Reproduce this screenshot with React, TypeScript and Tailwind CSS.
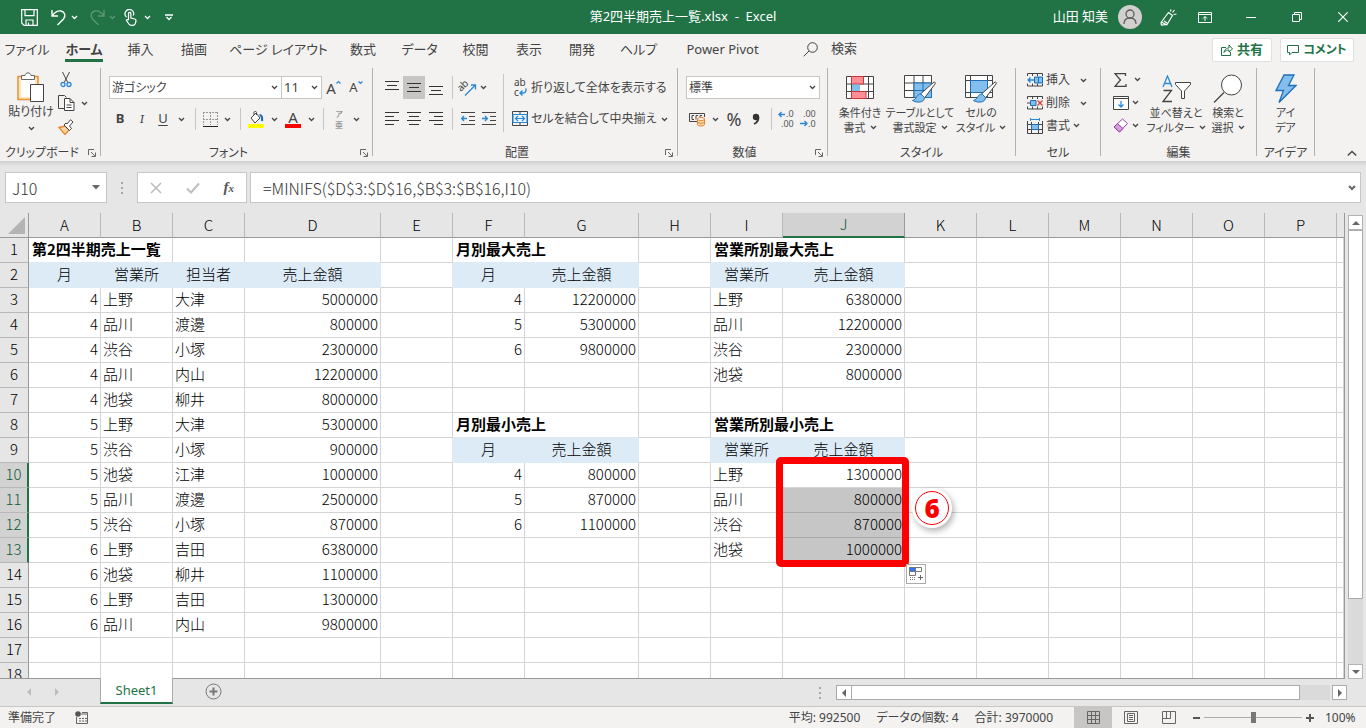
import {ReactNode} from "react";

type Cell = string | number;

const columns = ["A", "B", "C", "D", "E", "F", "G", "H", "I", "J", "K", "L", "M", "N", "O", "P", ""];
const widths = [72, 72, 72, 136, 72, 72, 114, 72, 72, 122, 72, 72, 72, 72, 72, 72];

const blank: Cell[] = ["", "", "", "", "", "", "", "", "", "", "", "", "", "", "", "", ""];

const fillRow = (values: Cell[]) => blank.map((cell, i) => values[i] ?? cell);

const rows: Cell[][] = [
    ["第2四半期売上一覧", "", "", "", "", "月別最大売上", "", "", "営業所別最大売上"],
    ["月", "営業所", "担当者", "売上金額", "", "月", "売上金額", "", "営業所", "売上金額"],
    [4, "上野", "大津", 5000000, "", 4, 12200000, "", "上野", 6380000],
    [4, "品川", "渡邊", 800000, "", 5, 5300000, "", "品川", 12200000],
    [4, "渋谷", "小塚", 2300000, "", 6, 9800000, "", "渋谷", 2300000],
    [4, "品川", "内山", 12200000, "", "", "", "", "池袋", 8000000],
    [4, "池袋", "柳井", 8000000],
    [5, "上野", "大津", 5300000, "", "月別最小売上", "", "", "営業所別最小売上"],
    [5, "渋谷", "小塚", 900000, "", "月", "売上金額", "", "営業所", "売上金額"],
    [5, "池袋", "江津", 1000000, "", 4, 800000, "", "上野", 1300000],
    [5, "品川", "渡邊", 2500000, "", 5, 870000, "", "品川", 800000],
    [5, "渋谷", "小塚", 870000, "", 6, 1100000, "", "渋谷", 870000],
    [6, "上野", "吉田", 6380000, "", "", "", "", "池袋", 1000000],
    [6, "池袋", "柳井", 1100000],
    [6, "上野", "吉田", 1300000],
    [6, "品川", "内山", 9800000],
    [],
    [],
].map(fillRow);

const isTitle = (r: number, c: number) =>
    (r === 0 && [0, 5, 8].includes(c)) || (r === 7 && [5, 8].includes(c));

const isHeading = (r: number, c: number) =>
    (r === 1 && (c <= 3 || c === 5 || c === 6 || c === 8 || c === 9)) ||
    (r === 8 && (c === 5 || c === 6 || c === 8 || c === 9));

const isSelectedRow = (r: number) => r >= 9 && r <= 12;

const tabs = [
    {name: "ファイル", width: "w-[54px]"},
    {name: "ホーム", width: "w-[60px]"},
    {name: "挿入", width: "w-[53px]"},
    {name: "描画", width: "w-[54px]"},
    {name: "ページ レイアウト", width: "w-[115px]"},
    {name: "数式", width: "w-[54px]"},
    {name: "データ", width: "w-[59px]"},
    {name: "校閲", width: "w-[53px]"},
    {name: "表示", width: "w-[54px]"},
    {name: "開発", width: "w-[52px]"},
    {name: "ヘルプ", width: "w-[61px]"},
    {name: "Power Pivot", width: "w-[107px]"},
];

const Icon = ({w, h, children, className = ""}: {w: number, h: number, children: ReactNode, className?: string}) => (
    <svg width={w} height={h} viewBox={`0 0 ${w} ${h}`} fill="none" stroke="#444" className={"shrink-0 " + className}
         aria-hidden="true">
        {children}
    </svg>
);

const Chevron = ({color = "#444"}: {color?: string}) => (
    <Icon w={7} h={5} className="inline-block"><path d="M1 1l2.5 2.5L6 1" stroke={color} strokeWidth="1.3"/></Icon>
);

const Tool = ({label, className, children}: {label: string, className: string, children: ReactNode}) => (
    <button type="button" aria-label={label} className={"flex h-full shrink-0 items-center justify-center " + className}>
        {children}
    </button>
);

const Drop = ({className}: {className: string}) => (
    <Tool label="その他のオプション" className={className}><Chevron/></Tool>
);

const Divider = ({className}: {className: string}) => (
    <div className={"flex h-full shrink-0 justify-center " + className}><div className="h-full w-px bg-[#c8c6c4]"/></div>
);

const Group = ({name, className, launcher, children}: {name: string, className: string, launcher?: boolean, children: ReactNode}) => (
    <section aria-label={name} className={"flex shrink-0 " + className}>
        <div className="flex min-w-0 flex-1 flex-col">
            <div className="h-[76px] shrink-0">{children}</div>
            <div className="flex h-[17px] shrink-0 items-center">
                <span className="flex-1 whitespace-nowrap text-center leading-[17px]">{name}</span>
                {launcher && (
                    <button type="button" aria-label={name + "の設定"} className="w-4 pl-1">
                        <Icon w={8} h={8}><path d="M.5 6V.5H6M3 3l4 4M7.5 3.5v4h-4" stroke="#666"/></Icon>
                    </button>
                )}
            </div>
        </div>
        <div className="h-[88px] w-px bg-[#b3b0ad]"/>
    </section>
);

const BigButton = ({icon, lines, drop, className}: {icon: ReactNode, lines: string[], drop?: boolean, className: string}) => (
    <button type="button" className={"flex shrink-0 flex-col items-center whitespace-nowrap text-[11px] leading-[15px] " + className}>
        <span className="flex h-[37px] items-center pt-1">{icon}</span>
        <span>{lines[0]}</span>
        <span className="flex items-center gap-1">{lines[1]}{drop && <Chevron/>}</span>
    </button>
);

const Lines = ({rows}: {rows: number[][]}) => (
    <Icon w={14} h={14}>
        {rows.map(([x, y, w]) => <path key={y} d={`M${x} ${y}.5h${w}`} stroke="#333"/>)}
    </Icon>
);

const TitleBar = () => (
    <header className="flex h-[34px] shrink-0 items-center bg-[#217346] text-[13px] text-white">
        <div className="flex flex-1 items-center">
            <button type="button" aria-label="上書き保存" className="ml-[21px]">
                <Icon w={17} h={17}>
                    <path d="M.7.7h15.6v15.6H3L.7 14zM4 .7v6h9v-6M5 16v-5h7v5M7.5 16v-2.500" stroke="#fff" strokeWidth="1.2"/>
                </Icon>
            </button>
            <button type="button" aria-label="元に戻す" className="ml-[13px] flex items-center gap-1">
                <Icon w={16} h={17}>
                    <path d="M1 1v6h6M1.300 6.700C4 3 7 1.500 10 2c4 .7 5 5 2.500 8L6.500 16" stroke="#fff" strokeWidth="1.400"/>
                </Icon>
                <Chevron color="#fff"/>
            </button>
            <button type="button" aria-label="やり直し" className="ml-[11px] flex items-center gap-1 opacity-25">
                <Icon w={16} h={17}>
                    <path d="M15 1v6H9M14.700 6.700C12 3 9 1.500 6 2 2 2.700 1 7 3.500 10l6 6" stroke="#fff" strokeWidth="1.400"/>
                </Icon>
                <Chevron color="#fff"/>
            </button>
            <button type="button" aria-label="タッチ/マウス モードの切り替え" className="ml-[8px] flex items-center gap-1.5">
                <Icon w={14} h={17}>
                    <path d="M2.500 8A4.300 4.300 0 1 1 9.300 6.500M4.500 11V4.500a1.200 1.200 0 0 1 2.400 0V9l3.800 1c1 .3 1.500.8 1.300 2l-.7 2.500c-.5 1.200-1 1.800-2.300 1.800H7c-1.500 0-2.300-1-3.500-3.300L2.300 11c.6-.8 1.400-.6 2.200.3"
                          stroke="#fff" strokeWidth="1.200"/>
                </Icon>
                <Chevron color="#fff"/>
            </button>
            <button type="button" aria-label="クイック アクセス ツール バーのユーザー設定" className="ml-[14px]">
                <Icon w={8} h={7}><path d="M0 1h8M1.500 3L4 5.500 6.500 3" stroke="#fff" strokeWidth="1.300"/></Icon>
            </button>
        </div>
        <h1 className="whitespace-pre">第2四半期売上一覧.xlsx  -  Excel</h1>
        <div className="flex flex-1 items-center justify-end">
            <span>山田 知美</span>
            <button type="button" aria-label="アカウント" className="ml-[10px] flex size-6 items-center justify-center rounded-full bg-[#d2d0ce]">
                <Icon w={14} h={16}>
                    <circle cx="7" cy="5" r="4" stroke="#605e5c" strokeWidth="1.300"/>
                    <path d="M1 15c0-4 2.500-6 6-6s6 2 6 6" stroke="#605e5c" strokeWidth="1.300"/>
                </Icon>
            </button>
            <button type="button" aria-label="近日公開の機能" className="ml-[18px]">
                <Icon w={17} h={17}>
                    <path d="M1 13.500L8.500 3.500l4 3L7 15.500l-5.500.5zM1 13l6.500 3M10.500 2.500l.5-2M12.500 3.500l2-2.500M13.500 5.500l3-.5M4 12l3 2" stroke="#fff" strokeWidth="1.200"/>
                </Icon>
            </button>
            <button type="button" aria-label="リボンの表示オプション" className="ml-[21px]">
                <Icon w={14} h={11}><path d="M.5.5h13v10H.5zM.5 2.500h13M7 9V4.500M5 6.500l2-2 2 2" stroke="#fff"/></Icon>
            </button>
            <button type="button" aria-label="最小化" className="ml-[34px]">
                <Icon w={10} h={10}><path d="M0 5.500h10" stroke="#fff"/></Icon>
            </button>
            <button type="button" aria-label="元に戻す (縮小)" className="ml-[36px]">
                <Icon w={10} h={10}><path d="M.5 2.500h7v7h-7zM2.500 2.500v-2h7v7h-2" stroke="#fff"/></Icon>
            </button>
            <button type="button" aria-label="閉じる" className="ml-[36px] mr-[18px]">
                <Icon w={10} h={10}><path d="M.3.3l9.400 9.400M9.700.3L.3 9.700" stroke="#fff" strokeWidth="1.200"/></Icon>
            </button>
        </div>
    </header>
);

const Tabs = () => (
    <nav className="flex h-8 items-center text-[13px]">
        {tabs.map((tab, index) => (
            <button key={tab.name} type="button" className={"flex h-full shrink-0 justify-center whitespace-nowrap " + tab.width}>
                <span className={index === 1 ? "h-[28px] border-b-3 border-[#217346] font-bold leading-[30px]" : "leading-[30px]"}>
                    {tab.name}
                </span>
            </button>
        ))}
        <button type="button" className="ml-[27px] flex h-full items-center gap-[13px] pb-0.5">
            <Icon w={15} h={15}><circle cx="9.500" cy="5.500" r="4.800"/><path d="M6 9L.7 14.300"/></Icon>
            検索
        </button>
        <div className="ml-auto flex gap-2 pr-3 font-bold text-[#217346]">
            <button type="button" className="flex h-6 w-[60px] items-center justify-center gap-1 rounded-xs border border-[#e1dfdd] bg-white">
                <Icon w={12} h={12}>
                    <path d="M5 3.500H.5v8h9V8M3 8.500C3.500 5 6 4 8 4V1l3.500 4L8 8V6C6 6 4 6.500 3 8.500z" stroke="#217346"/>
                </Icon>
                共有
            </button>
            <button type="button" className="flex h-6 w-[74px] items-center justify-center gap-1 whitespace-nowrap rounded-xs border border-[#e1dfdd] bg-white text-xs">
                <Icon w={12} h={11}><path d="M.5.5h11v7H5l-2.500 2.500V7.500h-2z" stroke="#217346"/></Icon>
                コメント
            </button>
        </div>
    </nav>
);

const ClipboardGroup = () => (
    <Group name="クリップボード" launcher className="w-[101px]">
        <div className="flex h-full">
            <button type="button" className="flex w-[54px] shrink-0 flex-col items-center whitespace-nowrap pl-2 pt-1">
                <Icon w={28} h={31}>
                    <path d="M1 4.500h20v23H1z" stroke="#e8912d" strokeWidth="1.500" fill="#fce4bd"/>
                    <path d="M4 7h14v18H4z" fill="#fff" stroke="none"/>
                    <path d="M4.500 7.500v-4H8c.5-3.500 5.500-3.500 6 0h3.500v4z" fill="#fff" stroke="#666"/>
                    <path d="M13.500 12.500h13v17h-13z" fill="#fff"/>
                </Icon>
                <span className="leading-[18px]">貼り付け</span>
                <span className="pt-1 leading-[5px]"><Chevron/></span>
            </button>
            <div className="flex flex-col">
                <div className="flex h-[23px]">
                    <Tool label="切り取り" className="w-6">
                        <Icon w={12} h={17}>
                            <path d="M2.500 1l5.500 11M9.500 1L4 12"/>
                            <circle cx="3" cy="13.500" r="2" stroke="#2b88d8" strokeWidth="1.300"/>
                            <circle cx="9" cy="13.500" r="2" stroke="#2b88d8" strokeWidth="1.300"/>
                        </Icon>
                    </Tool>
                </div>
                <div className="flex h-6">
                    <Tool label="コピー" className="w-6">
                        <Icon w={17} h={16}>
                            <path d="M6.500 13.500h-6V.5h6l2 2"/>
                            <path d="M6.500 3.500h5.500l4 4v8H6.500zM12 3.500v4h4M8.500 10h5M8.500 12.500h5" fill="#fff"/>
                        </Icon>
                    </Tool>
                    <Drop className="w-[12px]"/>
                </div>
                <div className="flex h-[23px]">
                    <Tool label="書式のコピー/貼り付け" className="w-6">
                        <Icon w={16} h={16}>
                            <path d="M1 8.500l6-1.500 4 4-4 4.500z" fill="#fbd7a5" stroke="#e8832a" strokeWidth="1.300"/>
                            <path d="M6 6l5.500 5.500 2-2L11.500 7 15 3 12.500.7 9 5 8 4z" fill="#fff"/>
                        </Icon>
                    </Tool>
                </div>
            </div>
        </div>
    </Group>
);

const FontGroup = () => (
    <Group name="フォント" launcher className="w-[272px]">
        <div className="pl-2 pt-2">
            <div className="flex h-[23px]">
                <div className="relative w-[173px]">
                    <select aria-label="フォント" className="h-full w-full appearance-none border border-[#c8c6c4] bg-white px-0.5 text-xs">
                        <option>游ゴシック</option>
                    </select>
                    <span className="pointer-events-none absolute right-1 top-0 flex h-full items-center"><Chevron/></span>
                </div>
                <div className="relative -ml-px w-[41px]">
                    <select aria-label="フォント サイズ" className="h-full w-full appearance-none border border-[#c8c6c4] bg-white px-0.5 text-[13px]">
                        <option>11</option>
                    </select>
                    <span className="pointer-events-none absolute right-1 top-0 flex h-full items-center"><Chevron/></span>
                </div>
                <Tool label="フォント サイズの拡大" className="w-[23px] text-[15px]">
                    A<Icon w={5} h={18}><path d="M.5 4.500l2-2 2 2" stroke="#2b88d8" strokeWidth="1.200"/></Icon>
                </Tool>
                <Tool label="フォント サイズの縮小" className="w-[22px] text-[13px]">
                    A<Icon w={5} h={18}><path d="M.5 2.500l2 2 2-2" stroke="#2b88d8" strokeWidth="1.200"/></Icon>
                </Tool>
            </div>
            <div className="mt-[9px] flex h-[22px] text-[13px]">
                <Tool label="太字" className="w-[22px] font-bold">B</Tool>
                <Tool label="斜体" className="w-[22px] font-serif italic">I</Tool>
                <Tool label="下線" className="w-5 underline underline-offset-2">U</Tool>
                <Drop className="w-4"/>
                <Divider className="w-[13px]"/>
                <Tool label="罫線" className="w-4">
                    <Icon w={15} h={15}>
                        <path d="M.5 0v13M7.500 0v13M14.500 0v13M0 .5h15M0 7.500h15" stroke="#999" strokeDasharray="2 1"/>
                        <path d="M0 14.500h15" stroke="#222"/>
                    </Icon>
                </Tool>
                <Drop className="w-[18px]"/>
                <Divider className="w-[9px]"/>
                <Tool label="塗りつぶしの色" className="w-[22px]">
                    <Icon w={16} h={17}>
                        <path d="M3 7l5-5 4 5-5 5zM6 4V1.500c0-1.500 2.500-1.500 2.500 0V4" fill="#fff"/>
                        <path d="M11.500 4c2 0 3 2 2.500 6" stroke="#1e6fb8" strokeWidth="2.200"/>
                        <path d="M0 13h16v4H0z" fill="#ff0" stroke="none"/>
                    </Icon>
                </Tool>
                <Drop className="w-[14px]"/>
                <Tool label="フォントの色" className="w-6 flex-col text-[15px] leading-[14px]">
                    A<span className="h-1 w-4 bg-[#f00]"/>
                </Tool>
                <Drop className="w-3"/>
                <Divider className="w-3"/>
                <Tool label="ふりがなの表示/非表示" className="w-5">
                    <span className="flex flex-col text-[8px] leading-[11px] text-[#777]"><span>ア</span><span>亜</span></span>
                </Tool>
                <Drop className="w-[14px]"/>
            </div>
        </div>
    </Group>
);

const AlignmentGroup = () => (
    <Group name="配置" launcher className="w-[305px]">
        <div className="flex pl-2">
            <div className="w-[122px] pt-2">
                <div className="flex h-[23px]">
                    <Tool label="上揃え" className="w-[22px]"><Lines rows={[[0, 0, 14], [2, 4, 10], [0, 8, 14]]}/></Tool>
                    <Tool label="上下中央揃え" className="w-[22px] bg-[#c8c6c4]"><Lines rows={[[0, 2, 14], [2, 6, 10], [0, 10, 14]]}/></Tool>
                    <Tool label="下揃え" className="w-[22px]"><Lines rows={[[0, 5, 14], [2, 9, 10], [0, 13, 14]]}/></Tool>
                    <Divider className="w-[10px]"/>
                    <Tool label="方向" className="w-5">
                        <Icon w={20} h={20}>
                            <text x="3" y="12" fontSize="10" fill="#444" stroke="none" transform="rotate(-45 6 12)">ab</text>
                            <path d="M8 17.500L18.500 7M14 7h4.500v4.500" stroke="#2b88d8" strokeWidth="1.300"/>
                        </Icon>
                    </Tool>
                    <Drop className="w-3"/>
                </div>
                <div className="mt-[9px] flex h-[22px]">
                    <Tool label="左揃え" className="w-[22px]"><Lines rows={[[0, 0, 14], [0, 4, 9], [0, 8, 14], [0, 12, 9]]}/></Tool>
                    <Tool label="中央揃え" className="w-[22px]"><Lines rows={[[0, 0, 14], [2, 4, 10], [0, 8, 14], [2, 12, 10]]}/></Tool>
                    <Tool label="右揃え" className="w-[22px]"><Lines rows={[[0, 0, 14], [5, 4, 9], [0, 8, 14], [5, 12, 9]]}/></Tool>
                    <Divider className="w-[10px]"/>
                    <Tool label="インデントを減らす" className="w-[21px]">
                        <Icon w={14} h={14}>
                            <path d="M0 .5h14M8 4.500h6M8 8.500h6M0 12.500h14"/>
                            <path d="M6 6.500H1M3 4L.7 6.500 3 9" stroke="#2b88d8" strokeWidth="1.400"/>
                        </Icon>
                    </Tool>
                    <Tool label="インデントを増やす" className="w-[22px]">
                        <Icon w={14} h={14}>
                            <path d="M0 .5h14M8 4.500h6M8 8.500h6M0 12.500h14"/>
                            <path d="M0 6.500h5M3 4l2.300 2.500L3 9" stroke="#2b88d8" strokeWidth="1.400"/>
                        </Icon>
                    </Tool>
                </div>
            </div>
            <div className="mt-1.5 h-[58px] w-px bg-[#c8c6c4]"/>
            <div className="whitespace-nowrap pl-2 pt-2">
                <button type="button" className="flex h-[23px] items-center gap-[3px]">
                    <Icon w={16} h={22}>
                        <g fill="#444" stroke="none" fontSize="10"><text x="2" y="9">ab</text><text x="2" y="19">c</text></g>
                        <path d="M14 11.500v1.500c0 2-1.500 3-3.500 3H8M10.500 13.500L8 16l2.500 2.500" stroke="#2b88d8" strokeWidth="1.400"/>
                    </Icon>
                    折り返して全体を表示する
                </button>
                <div className="mt-[9px] flex h-[22px] items-center">
                    <button type="button" className="flex items-center gap-[3px]">
                        <Icon w={16} h={16}>
                            <path d="M.5.5h15v14H.5zM8 .5v3M8 11.500v3"/>
                            <path d="M1 3.500h14v8H1zM4 7.500h8M6 5L3.500 7.500 6 10M10 5l2.500 2.500L10 10" fill="#e8f3fc" stroke="#2b88d8" strokeWidth="1.200"/>
                        </Icon>
                        セルを結合して中央揃え
                    </button>
                    <Drop className="w-4"/>
                </div>
            </div>
        </div>
    </Group>
);

const NumberGroup = () => (
    <Group name="数値" launcher className="w-[150px]">
        <div className="pl-2 pt-2">
            <div className="relative h-[23px] w-[134px]">
                <select aria-label="数値の書式" className="h-full w-full appearance-none border border-[#c8c6c4] bg-white px-0.5 text-xs">
                    <option>標準</option>
                </select>
                <span className="pointer-events-none absolute right-1 top-0 flex h-full items-center"><Chevron/></span>
            </div>
            <div className="mt-[9px] flex h-[22px]">
                <Tool label="通貨表示形式" className="w-[22px]">
                    <Icon w={17} h={15}>
                        <path d="M8 9.500H.5v-8h15V5M5 3.500H3v4h2M9 3.500H7v4M13 3.500h-2V5"/>
                        <path d="M8.500 7v5.500c0 2 7 2 7 0V7" fill="#fbd7a5" stroke="#e8832a"/>
                        <ellipse cx="12" cy="7" rx="3.500" ry="1.500" fill="#fff" stroke="#e8832a"/>
                        <path d="M8.500 9.700c0 2 7 2 7 0" stroke="#e8832a"/>
                    </Icon>
                </Tool>
                <Drop className="w-[14px]"/>
                <Tool label="パーセント スタイル" className="w-6 text-lg">%</Tool>
                <Tool label="桁区切りスタイル" className="w-5">
                    <Icon w={10} h={13}>
                        <circle cx="5" cy="4" r="3.200" fill="#333" stroke="none"/>
                        <path d="M7.500 4c0 4-2 6-4.500 7" stroke="#333" strokeWidth="1.800"/>
                    </Icon>
                </Tool>
                <Divider className="w-[10px]"/>
                <Tool label="小数点以下の表示桁数を増やす" className="w-[22px]">
                    <Icon w={18} h={22}>
                        <g fill="#555" stroke="none" fontSize="9"><text x="8" y="9">.0</text><text x="3" y="19">.00</text></g>
                        <path d="M7 6.500H1.500M3.500 4L1 6.500 3.500 9" stroke="#2b88d8" strokeWidth="1.400"/>
                    </Icon>
                </Tool>
                <Tool label="小数点以下の表示桁数を減らす" className="w-[22px]">
                    <Icon w={18} h={22}>
                        <g fill="#555" stroke="none" fontSize="9"><text x="3" y="9">.00</text><text x="8" y="19">.0</text></g>
                        <path d="M0 15.500h6.500M4.500 13L7 15.500 4.500 18" stroke="#2b88d8" strokeWidth="1.400"/>
                    </Icon>
                </Tool>
            </div>
        </div>
    </Group>
);

const Brush = () => (
    <g>
        <path d="M30 7L16.500 19l4 4L31 9c.7-1.500-.5-2.500-1-2z" fill="#fff"/>
        <path d="M17 19c-5 0-3.500 5-8.500 6.500 4 2.500 12 2.500 12-3z" fill="#83beec" stroke="#1e6fb8"/>
    </g>
);

const StylesGroup = () => (
    <Group name="スタイル" className="w-[188px]">
        <div className="flex pl-[3px]">
            <BigButton className="w-[58px]" lines={["条件付き", "書式"]} drop icon={
                <Icon w={29} h={28}>
                    <path d="M.5 1.500h27v22H.5zM.5 9h27M.5 16.500h27M5.500 1.500v22M22.500 1.500v22" fill="#fff"/>
                    <path d="M5.500 1.500h12V9h-12zM5.500 16.500H20v7H5.500z" fill="#ff8f94" stroke="#d13438"/>
                    <path d="M6 9.500h8V16H6z" fill="#83beec" stroke="none"/>
                </Icon>
            }/>
            <BigButton className="w-[62px]" lines={["テーブルとして", "書式設定"]} drop icon={
                <Icon w={32} h={28}>
                    <path d="M.5.5h27v22H.5zM.5 8h27M.5 15.500h27M10 .5v22M19 .5v22" fill="#fff"/>
                    <path d="M10 8h17.500v14.500H10zM10 15.500h17.500M19 8v14.500" fill="#83beec" stroke="#1e6fb8"/>
                    <Brush/>
                </Icon>
            }/>
            <BigButton className="w-[60px]" lines={["セルの", "スタイル"]} drop icon={
                <Icon w={32} h={28}>
                    <path d="M.5.5h27v22H.5zM.5 5.500h27M.5 17.500h27M5.500 .5v22M22.500 .5v22" fill="#fff"/>
                    <path d="M5.500 5.500h17v12h-17z" fill="#83beec" stroke="#1e6fb8"/>
                    <Brush/>
                </Icon>
            }/>
        </div>
    </Group>
);

const CellsGroup = () => (
    <Group name="セル" className="w-[85px]">
        <div className="flex flex-col pl-[11px]">
            <button type="button" className="flex h-[23px] items-center gap-[3px]">
                <Icon w={16} h={14}>
                    <path d="M.5 3V.5h15V3M5.500.5V3M10.500.5V3M.5 10.500V13h15v-2.500M5.500 13v-2.500M10.500 13v-2.500"/>
                    <path d="M7.500 4h8v6h-8zM11.500 4v6" fill="#83beec" stroke="#1e6fb8"/>
                    <path d="M7 7H1M3.500 4.500L1 7l2.500 2.500" stroke="#2b88d8" strokeWidth="1.300"/>
                </Icon>
                挿入<span className="ml-[7px]"><Chevron/></span>
            </button>
            <button type="button" className="flex h-[23px] items-center gap-[3px]">
                <Icon w={16} h={14}>
                    <path d="M.5 3V.5h15V3M5.500.5V3M10.500.5V3M.5 10.500V13h15v-2.500M5.500 13v-2.500M10.500 13v-2.500M0 7h3"/>
                    <path d="M3.500 4.500H9v5H3.500z" fill="#83beec" stroke="#1e6fb8"/>
                    <path d="M10.500 4.500l5 5M15.500 4.500l-5 5" stroke="#e03c31" strokeWidth="1.400"/>
                </Icon>
                削除<span className="ml-[7px]"><Chevron/></span>
            </button>
            <button type="button" className="flex h-[23px] items-center gap-[3px]">
                <Icon w={16} h={16}>
                    <path d="M.5 3v12.500h15V3M.5 6.500h15M.5 11.500h15M4.500 4v11M11.500 4v11"/>
                    <path d="M4.500 6.500h7v5h-7z" fill="#83beec" stroke="#1e6fb8"/>
                    <path d="M3 1.500h10M3.500 0v3M12.500 0v3" stroke="#2b88d8"/>
                </Icon>
                書式<Chevron/>
            </button>
        </div>
    </Group>
);

const EditingGroup = () => (
    <Group name="編集" className="w-[156px]">
        <div className="flex pl-[11px]">
            <div className="flex w-9 flex-col">
                <div className="flex h-[23px]">
                    <Tool label="オート SUM" className="w-[17px]">
                        <Icon w={13} h={14}><path d="M11.500 3V.7H1L6.500 7 1 13.300h11V11" strokeWidth="1.300"/></Icon>
                    </Tool>
                    <Drop className="w-[16px]"/>
                </div>
                <div className="flex h-[23px]">
                    <Tool label="フィル" className="w-[17px]">
                        <Icon w={16} h={14}>
                            <path d="M.5.5h15v13H.5zM.5 2.500h15" fill="#fff"/>
                            <path d="M8 5v6M5.500 8.500L8 11l2.500-2.500" stroke="#2b88d8" strokeWidth="1.300"/>
                        </Icon>
                    </Tool>
                    <Drop className="w-3"/>
                </div>
                <div className="flex h-[23px]">
                    <Tool label="クリア" className="w-[17px]">
                        <Icon w={16} h={15}>
                            <path d="M1 9l8.500-8L14.500 5.500 6.500 14z" fill="#fff" stroke="#9b3fa8"/>
                            <path d="M1 9l3.500-3.300L10 10.500 6.500 14z" fill="#d59ddb" stroke="#9b3fa8"/>
                        </Icon>
                    </Tool>
                    <Drop className="w-3"/>
                </div>
            </div>
            <BigButton className="w-[56px]" lines={["並べ替えと", "フィルター"]} drop icon={
                <Icon w={29} h={28}>
                    <path d="M1 12L5.500 1 10 12M2.500 8.500h6" stroke="#2b88d8" strokeWidth="1.300"/>
                    <path d="M1.500 15.500h8L1 26.500h9" strokeWidth="1.300"/>
                    <path d="M13.500 7.500h15v2L22.500 16v7.500h-3V16l-6-6.500z" fill="#fff"/>
                </Icon>
            }/>
            <BigButton className="w-12" lines={["検索と", "選択"]} drop icon={
                <Icon w={30} h={30}>
                    <circle cx="18.500" cy="11" r="10" fill="#fff"/><path d="M11 18.500L1 28.500" strokeWidth="1.300"/>
                </Icon>
            }/>
        </div>
    </Group>
);

const Ribbon = () => (
    <div className="flex h-[95px] overflow-hidden pt-0.5 text-xs">
        <ClipboardGroup/>
        <FontGroup/>
        <AlignmentGroup/>
        <NumberGroup/>
        <StylesGroup/>
        <CellsGroup/>
        <EditingGroup/>
        <Group name="アイデア" className="w-[58px]">
            <BigButton className="w-[57px]" lines={["アイ", "デア"]} icon={
                <Icon w={22} h={30}>
                    <path d="M9 1h10l-5.500 10.500H21L4 28.500l4.500-12H1z" fill="#83beec" stroke="#1e6fb8" strokeWidth="1.300"/>
                </Icon>
            }/>
        </Group>
        <button type="button" aria-label="リボンを折りたたむ" className="ml-auto self-end pb-1 pr-[9px]">
            <Icon w={10} h={7}><path d="M.7 5.500L5 1.500l4.300 4" strokeWidth="1.400"/></Icon>
        </button>
    </div>
);

const Dots = () => (
    <Icon w={2} h={12}><path d="M1 0v2M1 5v2M1 10v2" stroke="#a6a6a6" strokeWidth="2"/></Icon>
);

const FormulaBar = () => (
    <div className="flex h-[52px] shrink-0 bg-[#e6e6e6] bg-linear-to-b from-[#cfcfcf] from-0% to-[#e6e6e6] to-10% pl-[5px] pr-[5px] pt-[11px] font-['Noto_Sans_CJK_JP',sans-serif] text-base text-[#333] [font-feature-settings:normal]">
        <div className="flex h-[31px] w-[102px] items-center border border-[#c6c6c6] bg-white">
            <input aria-label="名前ボックス" defaultValue="J10" className="w-20 bg-transparent pl-1.5 font-light outline-none"/>
            <button type="button" aria-label="名前の一覧" className="pl-1.5">
                <Icon w={8} h={5}><path d="M0 0h8L4 4.500z" fill="#666" stroke="none"/></Icon>
            </button>
        </div>
        <div className="flex h-[31px] w-[30px] items-center justify-center"><Dots/></div>
        <div className="flex h-[31px] w-[110px] items-center justify-between border border-[#c6c6c6] bg-white px-3">
            <button type="button" aria-label="キャンセル">
                <Icon w={12} h={12}><path d="M1 1l10 10M11 1L1 11" stroke="#bdbdbd" strokeWidth="1.600"/></Icon>
            </button>
            <button type="button" aria-label="入力">
                <Icon w={14} h={12}><path d="M1 6.500L5 10.500 13 1.500" stroke="#bdbdbd" strokeWidth="2"/></Icon>
            </button>
            <button type="button" aria-label="関数の挿入" className="font-['Liberation_Serif',serif] text-[15px] font-bold italic text-[#555]">
                f<span className="text-[11px]">x</span>
            </button>
        </div>
        <div className="ml-[3px] flex h-[31px] flex-1 items-center border border-[#c6c6c6] bg-white">
            <input aria-label="数式バー" defaultValue="=MINIFS($D$3:$D$16,$B$3:$B$16,I10)"
                   className="flex-1 bg-transparent pl-3 font-light outline-none"/>
            <button type="button" aria-label="数式バーの展開" className="pr-1">
                <Icon w={8} h={6}><path d="M1 1l3 3 3-3" stroke="#666" strokeWidth="2"/></Icon>
            </button>
        </div>
    </div>
);

// frame, step number and auto fill button that float above J10:J13
const Callout = () => (
    <>
        <div className="absolute -left-[7px] -top-[6px] z-10 h-[110px] w-[133px] rounded-[5px] border-[7px] border-[#f00]"/>
        <div className="absolute left-[131px] top-[27px] z-10 flex size-9 items-center justify-center rounded-full bg-white shadow-[0_0_0_2px_#fff,2px_3px_6px_2px_rgba(0,0,0,0.3)]">
            <span className="flex size-[34px] shrink-0 items-center justify-center rounded-full border border-[#f00] font-['Noto_Sans',sans-serif] text-[26px] font-black leading-none text-[#f00]">6</span>
        </div>
        <button type="button" aria-label="オートフィル オプション"
                className="absolute left-[123px] top-[101px] z-10 flex size-5 items-center justify-center border border-[#ababab] bg-white">
            <Icon w={15} h={14}>
                <path d="M.5.5h6v4h-6z" fill="#2f75ff" stroke="#777"/>
                <path d="M6.500.5h6v4h-6zM.5 4.500h6v4h-6z" stroke="#777"/>
                <path d="M1 10.500h6M1 12.500h6" stroke="#777" strokeDasharray="1 1"/>
                <path d="M11.500 8v5M9 10.500h5" stroke="#666"/>
            </Icon>
        </button>
    </>
);

const cellClass = (r: number, c: number, value: Cell) => {
    const selected = c === 9 && r >= 10 && r <= 12;
    const right = isHeading(r, c) || isHeading(r, c + 1) ? "border-r-[#ddebf7]" : "border-r-[#d4d4d4]";
    const bottom = selected ? "border-b-[#a9a9a9]" : isHeading(r, c) || isHeading(r + 1, c) ? "border-b-[#ddebf7]" : "border-b-[#d4d4d4]";
    const background = selected ? "bg-[#c6c6c6]" : isHeading(r, c) ? "bg-[#ddebf7]" : "";
    const align = isHeading(r, c) ? "text-center" : typeof value === "number" ? "text-right" : "text-left";
    const weight = isTitle(r, c) ? "font-bold px-[3px]" : "font-light px-0.5";
    return ["h-[25px] whitespace-nowrap border-b border-r pt-0 pb-0.5 leading-[22px]", right, bottom, background, align, weight].join(" ");
};

const Sheet = () => (
    <table className="w-full table-fixed border-separate border-spacing-0 text-[15px] text-black">
        <colgroup>
            <col className="w-[29px]"/>
            {widths.map((width, i) => <col key={i} style={{width}}/>)}
            <col/>
        </colgroup>
        <thead>
            <tr className="bg-[#e6e6e6]">
                <th className="h-[25px] border-b border-r border-[#999] p-0" aria-label="すべて選択">
                    <Icon w={28} h={24}><path d="M25 4v17H8z" fill="#b4b4b4" stroke="none"/></Icon>
                </th>
                {columns.map((name, c) => (
                    <th key={c} scope="col"
                        className={"h-[25px] p-0 pb-0.5 font-light leading-[21px] " + (c === 9
                            ? "border-b-2 border-r border-b-[#217346] border-r-[#999] bg-[#d2d2d2] text-[#0f5c32]"
                            : c === 16 ? "border-b border-[#999]"
                            : "border-b border-r border-[#999] [border-right-color:#b8b8b8]")}>
                        {name}
                    </th>
                ))}
            </tr>
        </thead>
        <tbody>
            {rows.map((row, r) => (
                <tr key={r}>
                    <th scope="row"
                        className={"h-[25px] border-b border-b-[#b8b8b8] p-0 pb-0.5 font-light leading-[22px] " + (isSelectedRow(r)
                            ? "border-r-2 border-r-[#217346] bg-[#d2d2d2] text-[#0f5c32]"
                            : "border-r border-r-[#999] bg-[#e6e6e6]")}>
                        {r + 1}
                    </th>
                    {row.map((value, c) => {
                        if (c > 0 && isTitle(r, c - 1)) return null;
                        return (
                            <td key={c} colSpan={isTitle(r, c) ? 2 : 1}
                                className={cellClass(r, c, value) + (r === 9 && c === 9 ? " relative" : "")}>
                                {value}
                                {r === 9 && c === 9 && <Callout/>}
                            </td>
                        );
                    })}
                </tr>
            ))}
        </tbody>
    </table>
);

const Arrow = ({d, color = "#666"}: {d: string, color?: string}) => (
    <Icon w={8} h={8}><path d={d} fill={color} stroke="none"/></Icon>
);

const VerticalScroll = () => (
    <div className="flex w-[21px] shrink-0 flex-col bg-[#e6e6e6] pl-[3px] pr-[3px] pt-0.5">
        <button type="button" aria-label="上へスクロール" className="flex h-[15px] items-center justify-center border border-[#b4b4b4] bg-white">
            <Arrow d="M0 6h8L4 2z"/>
        </button>
        <div className="flex min-h-0 flex-1 flex-col bg-[#dadada]">
            <div className="h-[85%] border border-[#ababab] bg-white"/>
        </div>
        <button type="button" aria-label="下へスクロール" className="flex h-[15px] items-center justify-center border border-[#b4b4b4] bg-white">
            <Arrow d="M0 2h8L4 6z"/>
        </button>
    </div>
);

const SheetBar = () => (
    <div className="flex h-[28px] shrink-0 items-start border-b border-[#c6c6c6] bg-[#e6e6e6]">
        <div className="flex h-[26px] w-[100px] items-center gap-5 pl-[25px]">
            <button type="button" aria-label="前のシート"><Arrow color="#bdbdbd" d="M6 0v8L2 4z"/></button>
            <button type="button" aria-label="次のシート"><Arrow color="#bdbdbd" d="M2 0v8l4-4z"/></button>
        </div>
        <button type="button" className="z-10 -mt-px h-[26px] w-[73px] border-x border-b-2 border-x-[#ababab] border-b-[#217346] bg-white pt-0.5 text-[13px] text-[#217346]">
            Sheet1
        </button>
        <button type="button" aria-label="新しいシート" className="ml-8 mt-[4px]">
            <Icon w={17} h={17}>
                <circle cx="8.500" cy="8.500" r="7.500" stroke="#777"/>
                <path d="M8.500 4.500v8M4.500 8.500h8" stroke="#777" strokeWidth="2"/>
            </Icon>
        </button>
        <div className="ml-auto flex h-full w-1/2 items-center pl-[136px] pr-[19px]">
            <Dots/>
            <div className="ml-[15px] flex h-[15px] min-w-0 flex-1">
                <button type="button" aria-label="左へスクロール" className="flex w-4 items-center justify-center border border-[#ababab] bg-white">
                    <Arrow d="M6 0v8L2 4z"/>
                </button>
                <div className="mr-0.5 flex flex-1 bg-[#dadada]">
                    <div className="-ml-px w-[94%] border border-[#ababab] bg-white"/>
                </div>
                <button type="button" aria-label="右へスクロール" className="flex w-[15px] items-center justify-center border border-[#ababab] bg-white">
                    <Arrow d="M2 0v8l4-4z"/>
                </button>
            </div>
        </div>
    </div>
);

const StatusBar = () => (
    <footer className="flex h-[21px] shrink-0 items-center bg-[#f3f2f1] text-xs">
        <span className="pl-2">準備完了</span>
        <button type="button" aria-label="マクロの記録" className="ml-[19px]">
            <Icon w={13} h={13}>
                <path d="M1.500 6v6.500h11v-11H7M6 3h7M4 7.500h2M7 7.500h2M10 7.500h2M4 10h2M7 10h2M10 10h2" stroke="#666"/>
                <circle cx="3" cy="3" r="2.800" fill="#555" stroke="none"/>
            </Icon>
        </button>
        <div className="ml-auto flex gap-4 pr-[21px]">
            <span>平均: 992500</span>
            <span>データの個数: 4</span>
            <span>合計: 3970000</span>
        </div>
        <Tool label="標準" className="w-[38px] bg-[#c8c6c4]">
            <Icon w={13} h={13}><path d="M.5.5h12v12H.5zM.5 4.500h12M.5 8.500h12M4.500.5v12M8.500.5v12" stroke="#666"/></Icon>
        </Tool>
        <Tool label="ページ レイアウト表示" className="w-[38px]">
            <Icon w={14} h={13}><path d="M.5.5h13v12H.5zM3.500 2.500h7v8h-7zM5 4.500h4M5 6.500h4M5 8.500h4" stroke="#666"/></Icon>
        </Tool>
        <Tool label="改ページ プレビュー" className="w-[38px]">
            <Icon w={14} h={13}><path d="M.5.5h13v12H.5zM.5 7.500h8v-7M4.500.5v7" stroke="#666"/></Icon>
        </Tool>
        <button type="button" aria-label="縮小" className="ml-[5px]">
            <Icon w={7} h={8}><path d="M0 4h7" stroke="#555" strokeWidth="2"/></Icon>
        </button>
        <input type="range" aria-label="ズーム" defaultValue={50}
               className="mx-1 h-[11px] w-[98px] appearance-none bg-[linear-gradient(#ababab,#ababab)] bg-[length:100%_1px] bg-center bg-no-repeat [&::-webkit-slider-thumb]:h-[11px] [&::-webkit-slider-thumb]:w-[5px] [&::-webkit-slider-thumb]:appearance-none [&::-webkit-slider-thumb]:bg-[#777]"/>
        <button type="button" aria-label="拡大">
            <Icon w={8} h={8}><path d="M0 4h8M4 0v8" stroke="#555" strokeWidth="2"/></Icon>
        </button>
        <span className="w-[52px] pl-[11px]">100%</span>
    </footer>
);

const App = () => {
    return (
        <div className="flex h-screen flex-col overflow-hidden bg-[#f3f2f1] font-['Noto_Sans','Noto_Sans_CJK_JP',sans-serif] text-[#444] [font-feature-settings:'palt']">
            <TitleBar/>
            <div className="shrink-0">
                <Tabs/>
                <Ribbon/>
            </div>
            <FormulaBar/>
            <main className="flex min-h-0 flex-1 bg-[#e6e6e6]">
                <div className="min-w-0 flex-1 overflow-hidden border-b border-r border-[#999] bg-white font-['Noto_Sans_CJK_JP',sans-serif] [font-feature-settings:normal]">
                    <Sheet/>
                </div>
                <VerticalScroll/>
            </main>
            <SheetBar/>
            <StatusBar/>
        </div>
    );
};

export default App;
